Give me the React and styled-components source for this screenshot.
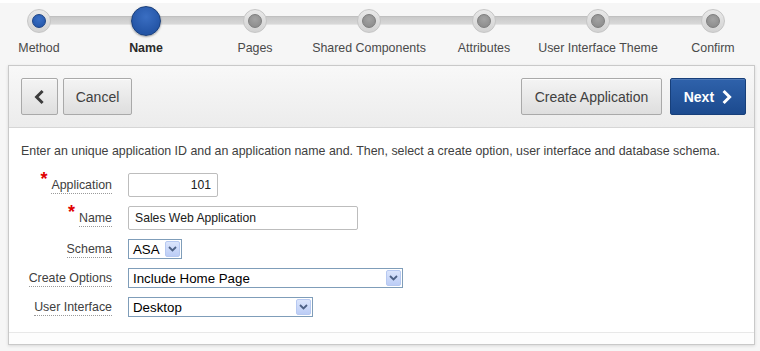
import React from 'react';
import styled, { createGlobalStyle } from 'styled-components';

const GlobalStyle = createGlobalStyle`
  body {
    margin: 0;
    background: #f6f6f6;
    font-family: "Liberation Sans", Arial, sans-serif;
    color: #404040;
  }
`;

const steps = [
  { label: 'Method', width: 78, state: 'done' },
  { label: 'Name', width: 136, state: 'current' },
  { label: 'Pages', width: 82, state: 'todo' },
  { label: 'Shared Components', width: 146, state: 'todo' },
  { label: 'Attributes', width: 84, state: 'todo' },
  { label: 'User Interface Theme', width: 144, state: 'todo' },
  { label: 'Confirm', width: 86, state: 'todo' },
];

const Page = styled.div`
  width: 760px;
  height: 351px;
  overflow: hidden;
  border-top: 3px solid #fff;
  box-sizing: border-box;
`;

const Wizard = styled.div`
  display: flex;
  height: 62px;
`;

const Step = styled.div`
  position: relative;
  display: flex;
  flex-direction: column;
  align-items: center;
  width: ${({ $w }) => $w}px;

  &::before,
  &::after {
    content: '';
    position: absolute;
    top: 13px;
    height: 7px;
    background: linear-gradient(#c9c9c9, #d8d8d8);
    border-top: 1px solid #c0c0c0;
    border-bottom: 1px solid #e4e4e4;
  }
  &::before {
    left: 0;
    right: 50%;
    display: ${({ $first }) => ($first ? 'none' : 'block')};
  }
  &::after {
    left: 50%;
    right: 0;
    display: ${({ $last }) => ($last ? 'none' : 'block')};
  }
`;

const Dot = styled.div`
  position: relative;
  z-index: 1;
  margin-top: ${({ $big }) => ($big ? '3px' : '6px')};
  margin-bottom: ${({ $big }) => ($big ? '5px' : '8px')};
  width: ${({ $big }) => ($big ? '30px' : '24px')};
  height: ${({ $big }) => ($big ? '30px' : '24px')};
  box-sizing: border-box;
  border-radius: 50%;
  display: flex;
  align-items: center;
  justify-content: center;
  background: ${({ $big }) =>
    $big ? 'radial-gradient(circle at 50% 35%, #3a6ec2, #2455a6 70%)' : 'linear-gradient(#e9e9e9, #d2d2d2)'};
  border: 1px solid ${({ $big }) => ($big ? '#1a3f7a' : '#c6c6c6')};
  box-shadow: ${({ $big }) => ($big ? '0 1px 2px rgba(0,0,0,0.35)' : 'none')};

  & > span {
    display: ${({ $big }) => ($big ? 'none' : 'block')};
    width: 14px;
    height: 14px;
    border-radius: 50%;
    background: ${({ $done }) =>
      $done ? 'radial-gradient(circle at 50% 35%, #3a70c6, #2152a4)' : 'radial-gradient(circle at 50% 35%, #a3a3a3, #888)'};
    border: 1px solid ${({ $done }) => ($done ? '#1b4386' : '#7d7d7d')};
    box-sizing: border-box;
  }
`;

const StepLabel = styled.div`
  font-size: 12.4px;
  line-height: 14px;
  white-space: nowrap;
  color: ${({ $current }) => ($current ? '#2a2a2a' : '#4a4a4a')};
  font-weight: ${({ $current }) => ($current ? 'bold' : 'normal')};
`;

const Panel = styled.div`
  margin: 0 5px 0 8px;
  border: 1px solid #c9c9c9;
  background: #fff;
  box-shadow: 0 1px 3px rgba(0, 0, 0, 0.12);
`;

const Header = styled.div`
  display: flex;
  align-items: center;
  justify-content: space-between;
  padding: 12px 8px 12px 12px;
  background: linear-gradient(#f8f8f8, #ececec);
  border-bottom: 1px solid #d6d6d6;
`;

const Group = styled.div`
  display: flex;
  gap: ${({ $gap }) => $gap}px;
`;

const Button = styled.button`
  height: 37px;
  box-sizing: border-box;
  padding: ${({ $icon }) => ($icon ? '0' : '0 12px')};
  width: ${({ $w }) => $w}px;
  display: flex;
  align-items: center;
  justify-content: center;
  gap: 7px;
  font-family: "Liberation Sans", Arial, sans-serif;
  font-size: 14px;
  border-radius: 2px;
  color: ${({ $primary }) => ($primary ? '#fff' : '#404040')};
  font-weight: ${({ $primary }) => ($primary ? 'bold' : 'normal')};
  background: ${({ $primary }) =>
    $primary ? 'linear-gradient(#2f62ab, #1c4a8e)' : 'linear-gradient(#f4f4f4, #dedede)'};
  border: 1px solid ${({ $primary }) => ($primary ? '#173f7a' : '#a9a9a9')};
  box-shadow: inset 0 1px 0 rgba(255, 255, 255, ${({ $primary }) => ($primary ? 0.15 : 0.8)});
`;

const Body = styled.div`
  padding: 16px 12px 15px 12px;
  border-bottom: 1px solid #e8e8e8;
`;

const Intro = styled.p`
  margin: 0 0 15px 0;
  font-size: 12.4px;
  line-height: 14px;
  white-space: nowrap;
  color: #404040;
`;

const Form = styled.div`
  display: grid;
  grid-template-columns: 91px auto;
  column-gap: 16px;
  row-gap: 9px;
  align-items: center;
  justify-items: start;
`;

const LabelCell = styled.div`
  justify-self: end;
  position: relative;
  top: 1px;
  font-size: 12.4px;
  line-height: 14px;
  color: #404040;
  border-bottom: 1px dotted #9a9a9a;
  padding-bottom: 1px;
`;

const Required = styled.span`
  position: absolute;
  left: -11px;
  top: -6px;
  color: #e00000;
  font-size: 18px;
  font-weight: bold;
  line-height: 14px;
`;

const TextInput = styled.div`
  width: ${({ $w }) => $w}px;
  height: 24px;
  box-sizing: border-box;
  border: 1px solid #bdbdbd;
  border-radius: 2px;
  background: #fff;
  display: flex;
  align-items: center;
  justify-content: ${({ $right }) => ($right ? 'flex-end' : 'flex-start')};
  padding: 0 6px;
  font-size: 12.2px;
  color: #202020;
`;

const Select = styled.div`
  width: ${({ $w }) => $w}px;
  height: ${({ $h }) => $h || 20}px;
  box-sizing: border-box;
  border: 1px solid #7f9db9;
  background: #fff;
  display: flex;
  align-items: center;
  justify-content: space-between;
  padding: 1px 1px 1px 4px;
  font-size: 13.3px;
  color: #000;
`;

const Drop = styled.span`
  width: 15px;
  align-self: stretch;
  box-sizing: border-box;
  border: 1px solid #b7c9f1;
  border-radius: 2px;
  background: linear-gradient(#dbe5fc, #bccdf6);
  display: flex;
  align-items: center;
  justify-content: center;
`;

const Footer = styled.div`
  height: 11px;
  background: #fdfdfd;
`;

const Chevron = ({ dir, color, size = 16, stroke = 3 }) => (
  <svg width={size * 0.7} height={size} viewBox="0 0 11 16">
    <polyline
      points={dir === 'left' ? '8.5,2 2.5,8 8.5,14' : '2.5,2 8.5,8 2.5,14'}
      fill="none"
      stroke={color}
      strokeWidth={stroke}
    />
  </svg>
);

const DropArrow = () => (
  <Drop>
    <svg width="9" height="6" viewBox="0 0 9 6">
      <polyline points="1,1 4.5,4.5 8,1" fill="none" stroke="#4d6185" strokeWidth="1.8" />
    </svg>
  </Drop>
);

const Label = ({ children, required }) => (
  <LabelCell>
    {required && <Required>*</Required>}
    {children}
  </LabelCell>
);

export default function App() {
  return (
    <Page>
      <GlobalStyle />
      <Wizard>
        {steps.map((s, i) => (
          <Step key={s.label} $w={s.width} $first={i === 0} $last={i === steps.length - 1}>
            <Dot $big={s.state === 'current'} $done={s.state === 'done'}>
              <span />
            </Dot>
            <StepLabel $current={s.state === 'current'}>{s.label}</StepLabel>
          </Step>
        ))}
      </Wizard>
      <Panel>
        <Header>
          <Group $gap={5}>
            <Button $icon $w={37}>
              <Chevron dir="left" color="#3c3c3c" />
            </Button>
            <Button $w={69}>Cancel</Button>
          </Group>
          <Group $gap={8}>
            <Button $w={141}>Create Application</Button>
            <Button $primary $w={76}>
              Next
              <Chevron dir="right" color="#fff" />
            </Button>
          </Group>
        </Header>
        <Body>
          <Intro>
            Enter an unique application ID and an application name and. Then, select a create option, user interface
            and database schema.
          </Intro>
          <Form>
            <Label required>Application</Label>
            <TextInput $w={90} $right>101</TextInput>
            <Label required>Name</Label>
            <TextInput $w={230}>Sales Web Application</TextInput>
            <Label>Schema</Label>
            <Select $w={54}>
              ASA
              <DropArrow />
            </Select>
            <Label>Create Options</Label>
            <Select $w={275}>
              Include Home Page
              <DropArrow />
            </Select>
            <Label>User Interface</Label>
            <Select $w={185}>
              Desktop
              <DropArrow />
            </Select>
          </Form>
        </Body>
        <Footer />
      </Panel>
    </Page>
  );
}
